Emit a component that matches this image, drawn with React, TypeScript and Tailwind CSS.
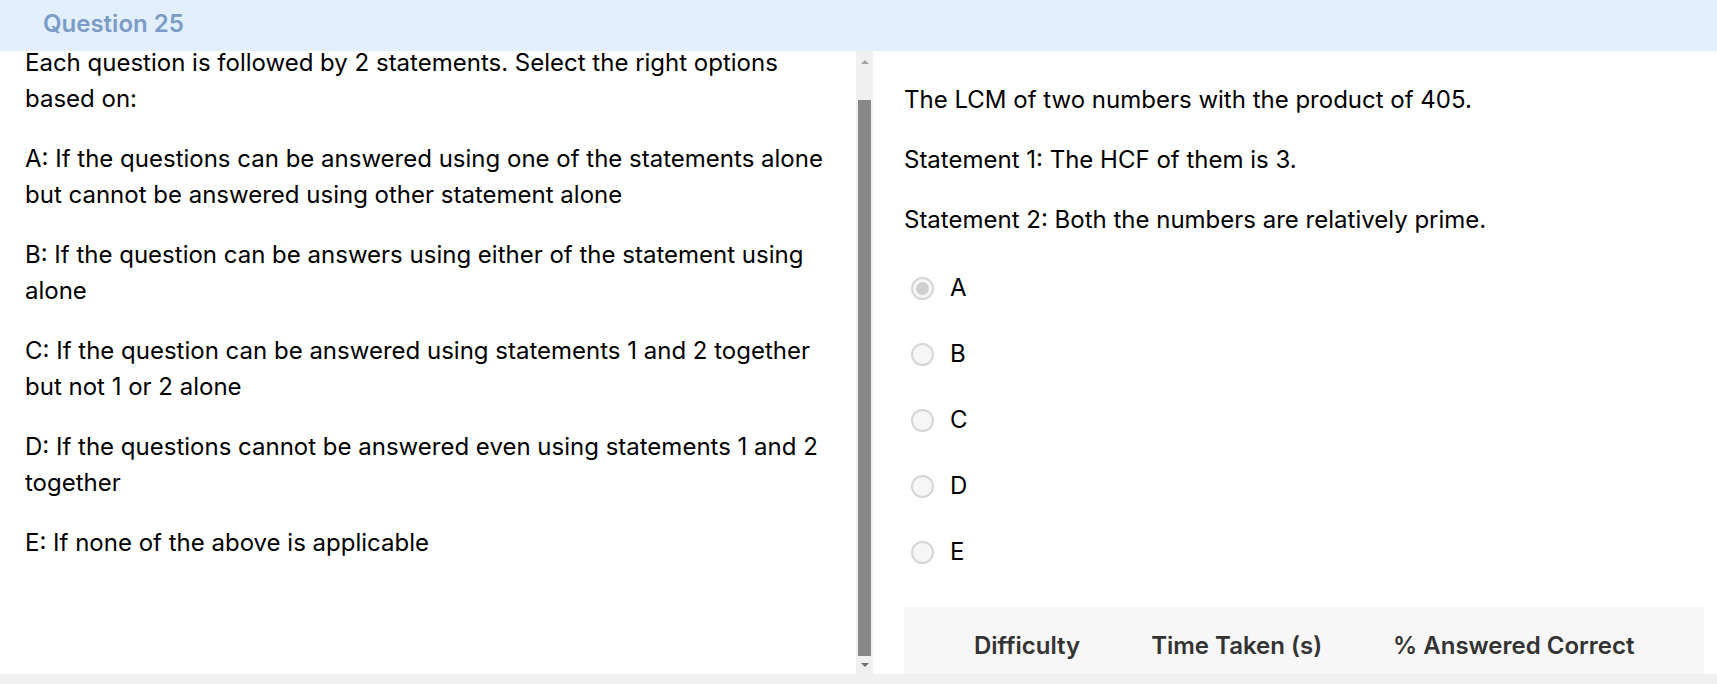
const rules = [
  "A: If the questions can be answered using one of the statements alone but cannot be answered using other statement alone",
  "B: If the question can be answers using either of the statement using alone",
  "C: If the question can be answered using statements 1 and 2 together but not 1 or 2 alone",
  "D: If the questions cannot be answered even using statements 1 and 2 together",
  "E: If none of the above is applicable",
];

const options = ["A", "B", "C", "D", "E"];

export default function App() {
  return (
    <div className="flex h-[684px] w-[1717px] flex-col overflow-hidden bg-white font-['Inter',sans-serif] text-[24px] text-black">

      {/* Header */}

      <div className="flex h-[51px] shrink-0 items-center bg-[#e3effd] pb-[4px] pl-[43px]">
        <h2 className="text-[24px] font-semibold text-[#7b9cc6]">
          Question 25
        </h2>
      </div>

      <div className="flex min-h-0 flex-1">

        {/* Directions */}

        <div className="flex w-[873px] shrink-0">

          <div className="min-w-0 flex-1 overflow-hidden pl-[25px] pr-[10px]">
            <div className="-mt-[6px] flex flex-col gap-[24px] leading-[36px]">
              <p>
                Each question is followed by 2 statements. Select the right options based on:
              </p>
              {rules.map((r) => (
                <p key={r}>{r}</p>
              ))}
            </div>
          </div>

          <Scrollbar />

        </div>

        {/* Question */}

        <div className="flex min-w-0 flex-1 flex-col overflow-hidden pl-[31px] pr-[13px] pt-[31px]">

          <div className="flex flex-col gap-[24px] leading-[36px]">
            <p>The LCM of two numbers with the product of 405.</p>
            <p>Statement 1: The HCF of them is 3.</p>
            <p>Statement 2: Both the numbers are relatively prime.</p>
          </div>

          <div className="mt-[32px] flex flex-col gap-[30px] pl-[7px]">
            {options.map((o, i) => (
              <label key={o} className="flex h-[36px] items-center gap-[16px]">
                <span className="flex h-[23px] w-[23px] items-center justify-center rounded-full border-2 border-[#d6d6d6] bg-[#f6f6f6]">
                  {i === 0 && (
                    <span className="h-[13px] w-[13px] rounded-full bg-[#cfcfcf]" />
                  )}
                </span>
                <span>{o}</span>
              </label>
            ))}
          </div>

          <div className="mt-[37px] flex h-[80px] shrink-0 bg-[#f7f7f7] pl-[70px] pt-[21px] font-semibold text-[#333333]">
            <div className="flex gap-[71px]">
              <span>Difficulty</span>
              <span>Time Taken (s)</span>
              <span>% Answered Correct</span>
            </div>
          </div>

        </div>

      </div>

      <div className="h-[10px] shrink-0 bg-[#f0f0f0]" />

    </div>
  );
}

function Scrollbar() {
  return (
    <div className="flex w-[17px] shrink-0 flex-col items-center bg-[#f0f0f0]">
      <div className="flex h-[17px] items-center justify-center pt-[4px]">
        <div className="h-0 w-0 border-x-[4px] border-b-[4px] border-x-transparent border-b-[#a3a3a3]" />
      </div>
      <div className="mt-[32px] w-[13px] flex-1 bg-[#888888]" />
      <div className="flex h-[18px] items-center justify-center">
        <div className="h-0 w-0 border-x-[4px] border-t-[4px] border-x-transparent border-t-[#6e6e6e]" />
      </div>
    </div>
  );
}
